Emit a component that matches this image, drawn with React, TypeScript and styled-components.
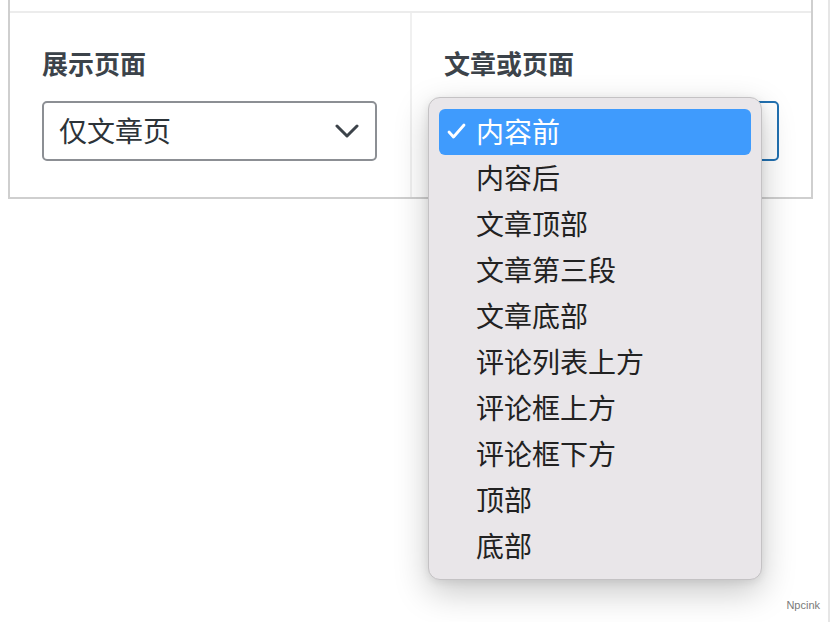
import { FC } from "react";
import styled, { createGlobalStyle } from "styled-components";

const GlobalStyle = createGlobalStyle`
  html, body {
    margin: 0;
    padding: 0;
    background: #fff;
  }
  body {
    font-family: "Noto Sans CJK SC", "Noto Sans", sans-serif;
    color: #2c3338;
  }
`;

const Page = styled.div`
  position: relative;
  width: 828px;
  height: 622px;
  border-right: 2px solid #e6e6e6;
  overflow: hidden;
`;

const Panel = styled.div`
  margin-left: 8px;
  width: 801px;
  border-left: 2px solid #cfcfcf;
  border-right: 2px solid #cfcfcf;
  border-bottom: 2px solid #cfcfcf;
  background: #fff;
`;

const TopStrip = styled.div`
  height: 11px;
  border-bottom: 2px solid #ececec;
`;

const Row = styled.div`
  display: grid;
  grid-template-columns: 400px 2px 1fr;
`;

const Divider = styled.div`
  background: #f0f0f0;
`;

const Cell = styled.div`
  position: relative;
  padding: 32px 32px 36px 32px;
  display: flex;
  flex-direction: column;
  gap: 21px;
`;

const Label = styled.div`
  font-size: 26px;
  line-height: 35px;
  font-weight: 700;
  color: #3c434a;
`;

const SelectBox = styled.div<{ $focused?: boolean }>`
  box-sizing: border-box;
  width: 335px;
  height: 60px;
  display: flex;
  align-items: center;
  justify-content: space-between;
  padding: 0 16px 3px 15px;
  border: 2px solid ${(p) => (p.$focused ? "#2271b1" : "#8c8f94")};
  border-radius: 5px;
  background: #fff;
  font-size: 28px;
  color: #2c3338;

  svg {
    margin-top: 3px;
  }
`;

const SelectValue = styled.span<{ $hidden?: boolean }>`
  visibility: ${(p) => (p.$hidden ? "hidden" : "visible")};
`;

const Menu = styled.div`
  position: absolute;
  left: 16px;
  top: 84px;
  box-sizing: border-box;
  width: 334px;
  padding: 11px 10px 10px 10px;
  background: #e9e6e9;
  border: 1px solid #c4c2c4;
  border-radius: 12px;
  box-shadow: 0 12px 34px rgba(0, 0, 0, 0.22), 0 2px 8px rgba(0, 0, 0, 0.08);
  z-index: 5;
`;

const MenuItem = styled.div<{ $active?: boolean }>`
  position: relative;
  box-sizing: border-box;
  height: 46px;
  display: flex;
  align-items: center;
  padding: 0 0 3px 37px;
  border-radius: 6px;
  font-size: 28px;
  color: ${(p) => (p.$active ? "#fff" : "#222")};
  background: ${(p) => (p.$active ? "#3f9bfd" : "transparent")};
`;

const Check = styled.svg`
  position: absolute;
  left: 8px;
  top: 14px;
`;

const Watermark = styled.div`
  position: absolute;
  right: 8px;
  bottom: 11px;
  font-family: "Liberation Sans", Arial, sans-serif;
  font-size: 11px;
  color: #7a7a7a;
`;

const Chevron: FC = () => (
  <svg width="24" height="14" viewBox="0 0 24 14">
    <polyline
      points="2,2 12,12 22,2"
      fill="none"
      stroke="#3c434a"
      strokeWidth="3"
      strokeLinecap="round"
      strokeLinejoin="round"
    />
  </svg>
);

const options = [
  "内容前",
  "内容后",
  "文章顶部",
  "文章第三段",
  "文章底部",
  "评论列表上方",
  "评论框上方",
  "评论框下方",
  "顶部",
  "底部",
];

const App: FC = () => {
  return (
    <>
      <GlobalStyle />
      <Page>
        <Panel>
          <TopStrip />
          <Row>
            <Cell>
              <Label>展示页面</Label>
              <SelectBox>
                <SelectValue>仅文章页</SelectValue>
                <Chevron />
              </SelectBox>
            </Cell>
            <Divider />
            <Cell>
              <Label>文章或页面</Label>
              <SelectBox $focused>
                <SelectValue $hidden>内容前</SelectValue>
                <Chevron />
              </SelectBox>
              <Menu>
                {options.map((o, i) => (
                  <MenuItem key={o} $active={i === 0}>
                    {i === 0 && (
                      <Check width="19" height="16" viewBox="0 0 19 16">
                        <polyline
                          points="2,9 6.5,14 17,2"
                          fill="none"
                          stroke="#fff"
                          strokeWidth="2.8"
                          strokeLinecap="round"
                          strokeLinejoin="round"
                        />
                      </Check>
                    )}
                    {o}
                  </MenuItem>
                ))}
              </Menu>
            </Cell>
          </Row>
        </Panel>
        <Watermark>Npcink</Watermark>
      </Page>
    </>
  );
};

export default App;
